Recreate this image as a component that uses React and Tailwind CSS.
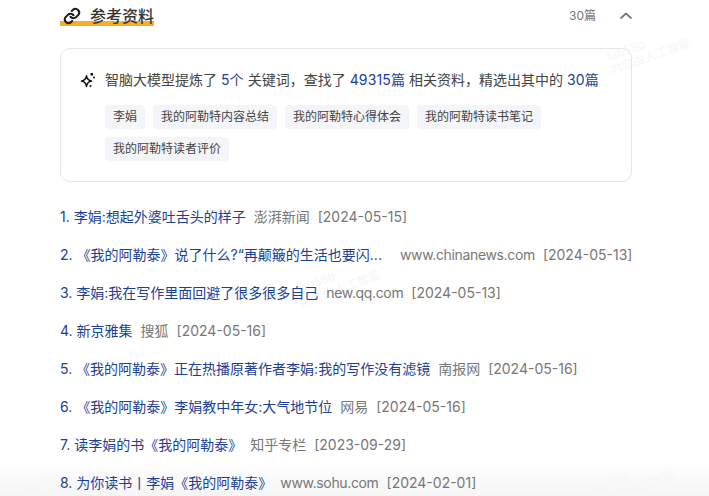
const items = [
  { t: "1. 李娟:想起外婆吐舌头的样子", s: "澎湃新闻", d: "[2024-05-15]" },
  { t: "2. 《我的阿勒泰》说了什么?“再颠簸的生活也要闪...", s: "www.chinanews.com", d: "[2024-05-13]", wide: true, latin: true },
  { t: "3. 李娟:我在写作里面回避了很多很多自己", s: "new.qq.com", d: "[2024-05-13]", latin: true },
  { t: "4. 新京雅集", s: "搜狐", d: "[2024-05-16]" },
  { t: "5. 《我的阿勒泰》正在热播原著作者李娟:我的写作没有滤镜", s: "南报网", d: "[2024-05-16]" },
  { t: "6. 《我的阿勒泰》李娟教中年女:大气地节位", s: "网易", d: "[2024-05-16]" },
  { t: "7. 读李娟的书《我的阿勒泰》", s: "知乎专栏", d: "[2023-09-29]" },
  { t: "8. 为你读书丨李娟《我的阿勒泰》", s: "www.sohu.com", d: "[2024-02-01]", latin: true },
];
const tags = ["李娟", "我的阿勒特内容总结", "我的阿勒特心得体会", "我的阿勒特读书笔记", "我的阿勒特读者评价"];
const marks = ["left-[606px] top-[36px]", "left-[296px] top-[268px]", "left-[20px] top-[468px]", "left-[590px] top-[468px]"];
const B = ({ children }) => <span className="text-[#1b4196] tracking-[0.15px]">{children}</span>;
export default function App() {
  return (
    <div className="relative w-[709px] h-[496px] overflow-hidden bg-white text-[14px] font-['Inter','Noto_Sans_CJK_SC',sans-serif]">
      <div className="absolute left-0 right-0 bottom-0 h-[36px] bg-gradient-to-b from-[#ffffff] to-[#f5f5f5]" />
      {marks.map((c, i) => (
        <div key={i} className={`absolute ${c} -rotate-[20deg] text-[12px] leading-[14px] text-[#f6f6f6] whitespace-nowrap`}>
          <div>1ab58b</div>
          <div>内容由人工智能</div>
        </div>
      ))}
      <div className="relative w-[572px] ml-[60px]">
        <div className="flex items-center h-[26px] mt-[3px]">
          <div className="relative flex items-center h-[26px] pl-[3px] w-[94px]">
            <div className="absolute left-0 right-0 top-[18px] h-[5px] bg-[#fbae24]" />
            <svg className="relative" width="18" height="18" viewBox="0 0 24 24" fill="none" stroke="#1c1c1c" strokeWidth="2.800" strokeLinecap="round" strokeLinejoin="round">
              <path d="M10 13a5 5 0 0 0 7.500.5l3-3a5 5 0 0 0-7-7l-1.700 1.700" />
              <path d="M14 11a5 5 0 0 0-7.500-.5l-3 3a5 5 0 0 0 7 7l1.700-1.700" />
            </svg>
            <span className="relative ml-[9px] text-[16px] font-medium text-[#333] whitespace-nowrap">参考资料</span>
          </div>
          <span className="ml-auto text-[12px] text-[#777]">30篇</span>
          <svg className="ml-[23px] mr-[-1px]" width="14" height="14" viewBox="0 0 14 14" fill="none" stroke="#777" strokeWidth="1.700">
            <path d="M1.500 9.500 7 4.500l5.500 5" />
          </svg>
        </div>
        <div className="mt-[19px] h-[134px] rounded-[10px] border border-[#e5e6eb] pt-[19px] pl-[20px] pr-[20px]">
          <div className="flex items-center h-[22px] text-[#444] whitespace-nowrap">
            <svg width="16" height="16" viewBox="0 0 16 16" className="mr-[9px] ml-[-1px] mt-[1px]">
              <path d="M6.500 3.800C7 7 8 8.300 11.500 9 8 9.700 7 11 6.500 14.500 6 11 5 9.700 1.500 9 5 8.300 6 7 6.500 3.800Z" fill="none" stroke="#111" strokeWidth="1.500" strokeLinejoin="round" />
              <rect x="10.500" y="1" width="2.500" height="2.500" fill="#111" />
              <circle cx="14" cy="5.500" r="1" fill="#111" />
              <circle cx="10.500" cy="14" r="1" fill="#111" />
            </svg>
            <span>智脑大模型提炼了 <B>5个</B> 关键词，查找了 <B>49315篇</B> 相关资料，精选出其中的 <B>30篇</B></span>
          </div>
          <div className="mt-[15px] ml-[24px] flex flex-wrap gap-[8px] w-[500px]">
            {tags.map((t) => (
              <span key={t} className="h-[24px] px-[8px] rounded-[4px] bg-[#f4f5f9] text-[12px] leading-[24px] text-[#444] whitespace-nowrap">{t}</span>
            ))}
          </div>
        </div>
        <div className="mt-[24px] flex flex-col gap-[16px]">
          {items.map((it) => (
            <div key={it.t} className="flex h-[22px] items-center whitespace-nowrap leading-[22px]">
              <span className="text-[#1b4196]">{it.t}</span>
              <span className={`${it.wide ? "ml-[18px]" : "ml-[8px]"} text-[#777] ${it.latin ? "tracking-[-0.35px]" : ""}`}>{it.s}</span>
              <span className="ml-[8px] text-[#777]">{it.d}</span>
            </div>
          ))}
        </div>
      </div>
    </div>
  );
}
